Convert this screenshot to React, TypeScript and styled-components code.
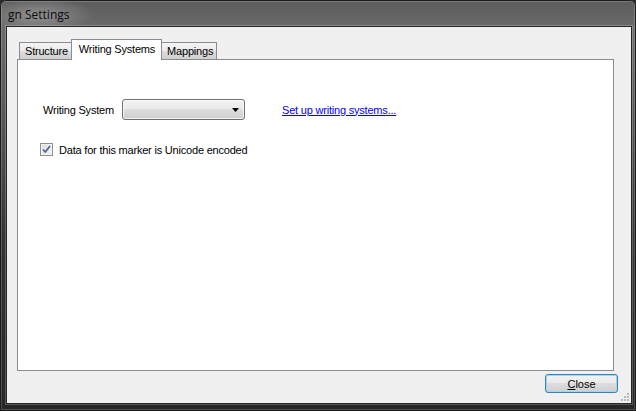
import React from 'react';
import styled, { createGlobalStyle } from 'styled-components';

const GlobalStyle = createGlobalStyle`
  html, body
  {
    margin: 0;
    padding: 0;
    background: #2a2a2a;
  }
  #root
  {
    width: 636px;
    height: 411px;
  }
`;

const Window = styled.div`
  box-sizing: border-box;
  width: 636px;
  height: 411px;
  display: flex;
  flex-direction: column;
  padding: 0 4px 7px 6px;
  border-radius: 6px 6px 0 0;
  background:
    radial-gradient(ellipse 70px 22px at 38px 15px, rgba(200, 200, 200, 0.45), rgba(0, 0, 0, 0) 80%),
    linear-gradient(to bottom, #5c5c5c 0, #6b6b6b 30px, #565656 120px, #353535 240px, #262626 100%);
  box-shadow: inset 0 0 0 1px #1b1b1b, inset 0 0 0 2px rgba(255, 255, 255, 0.18);
`;

const TitleBar = styled.div`
  height: 26px;
  display: flex;
  align-items: center;
  padding-left: 2px;
`;

const Title = styled.span`
  font-family: "Open Sans", "Noto Sans", sans-serif;
  font-size: 12px;
  color: #0a0a0a;
  margin-top: 2px;
`;

const Client = styled.div`
  flex: 1;
  position: relative;
  display: flex;
  flex-direction: column;
  background: #f0f0f0;
  border: 1px solid #262626;
  box-shadow: 0 0 0 1px rgba(255, 255, 255, 0.22);
  font-family: "Liberation Sans", Arial, sans-serif;
  font-size: 11px;
  letter-spacing: -0.2px;
  color: #000;
`;

const TabControl = styled.div`
  flex: 1;
  display: flex;
  flex-direction: column;
  margin: 12px 17px 0 10px;
`;

const TabStrip = styled.div`
  height: 20px;
  display: flex;
  align-items: flex-end;
  padding-left: 2px;
`;

const Tab = styled.div<{ $active?: boolean }>`
  box-sizing: border-box;
  position: relative;
  z-index: ${p => (p.$active ? 2 : 1)};
  height: ${p => (p.$active ? '21px' : '17px')};
  margin: ${p => (p.$active ? '0 -1px -1px -1px' : '0')};
  padding: ${p => (p.$active ? '3px 6px 0 7px' : '2px 3px 0 5px')};
  border: 1px solid #898c95;
  border-bottom: none;
  background: ${p => (p.$active ? '#fff' : 'linear-gradient(to bottom, #f3f3f3 0, #ebebeb 50%, #dddddd 50%, #d0d0d0 100%)')};
  white-space: nowrap;
`;

const TabPanel = styled.div`
  flex: 1;
  background: #fff;
  border: 1px solid #898c95;
  padding: 39px 0 0 22px;
`;

const FieldRow = styled.div`
  display: flex;
  align-items: center;
  height: 21px;
`;

const FieldLabel = styled.span`
  width: 79px;
  margin-left: 3px;
`;

const Combo = styled.div`
  box-sizing: border-box;
  width: 123px;
  height: 21px;
  border: 1px solid #707070;
  border-radius: 3px;
  background: linear-gradient(to bottom, #f2f2f2 0, #ebebeb 45%, #dddddd 50%, #cfcfcf 100%);
  box-shadow: inset 0 0 0 1px rgba(255, 255, 255, 0.7);
  display: flex;
  align-items: center;
  justify-content: flex-end;
  padding-right: 5px;
`;

const LinkText = styled.a`
  margin-left: 37px;
  color: #0000ff;
  text-decoration: underline;
  cursor: pointer;
`;

const CheckRow = styled.label`
  display: flex;
  align-items: center;
  margin-top: 23px;
  gap: 6px;
`;

const CheckBox = styled.span`
  box-sizing: border-box;
  width: 13px;
  height: 13px;
  border: 1px solid #8e8f8f;
  background: linear-gradient(135deg, #dcdcdc 0, #f4f4f4 100%);
  box-shadow: inset 0 0 0 1px #f4f4f4;
  display: flex;
  align-items: center;
  justify-content: center;
`;

const Footer = styled.div`
  display: flex;
  justify-content: flex-end;
  padding: 3px 13px 10px 0;
`;

const Button = styled.button`
  box-sizing: border-box;
  width: 73px;
  height: 19px;
  padding: 0;
  border: 1px solid #3c7fb1;
  border-radius: 3px;
  background: linear-gradient(to bottom, #f2f2f2 0, #ebebeb 45%, #dddddd 50%, #cfcfcf 100%);
  box-shadow: inset 0 0 0 1px #9fd6f5;
  font: inherit;
  color: #000;
  u
  {
    text-decoration: underline;
  }
`;

const Grip = styled.svg`
  position: absolute;
  right: 1px;
  bottom: 1px;
`;

const Arrow = () => (
  <svg width="7" height="4" viewBox="0 0 7 4">
    <path d="M0 0h7L3.5 4z" fill="#000" />
  </svg>
);

const Check = () => (
  <svg width="9" height="9" viewBox="0 0 9 9">
    <path d="M1 4.5l2.3 2.6L8 1" fill="none" stroke="#4a5f97" strokeWidth="1.6" />
  </svg>
);

const App: React.FC = () =>
{
  return (
    <>
      <GlobalStyle />
      <Window>
        <TitleBar>
          <Title>gn Settings</Title>
        </TitleBar>
        <Client>
          <TabControl>
            <TabStrip>
              <Tab>Structure</Tab>
              <Tab $active>Writing Systems</Tab>
              <Tab>Mappings</Tab>
            </TabStrip>
            <TabPanel>
              <FieldRow>
                <FieldLabel>Writing System</FieldLabel>
                <Combo>
                  <Arrow />
                </Combo>
                <LinkText>Set up writing systems...</LinkText>
              </FieldRow>
              <CheckRow>
                <CheckBox>
                  <Check />
                </CheckBox>
                <span>Data for this marker is Unicode encoded</span>
              </CheckRow>
            </TabPanel>
          </TabControl>
          <Footer>
            <Button><u>C</u>lose</Button>
          </Footer>
          <Grip width="10" height="10" viewBox="0 0 10 10">
            <g fill="#b8b8b8">
              <rect x="7" y="1" width="2" height="2" />
              <rect x="4" y="4" width="2" height="2" />
              <rect x="7" y="4" width="2" height="2" />
              <rect x="1" y="7" width="2" height="2" />
              <rect x="4" y="7" width="2" height="2" />
              <rect x="7" y="7" width="2" height="2" />
            </g>
          </Grip>
        </Client>
      </Window>
    </>
  );
};

export default App;
